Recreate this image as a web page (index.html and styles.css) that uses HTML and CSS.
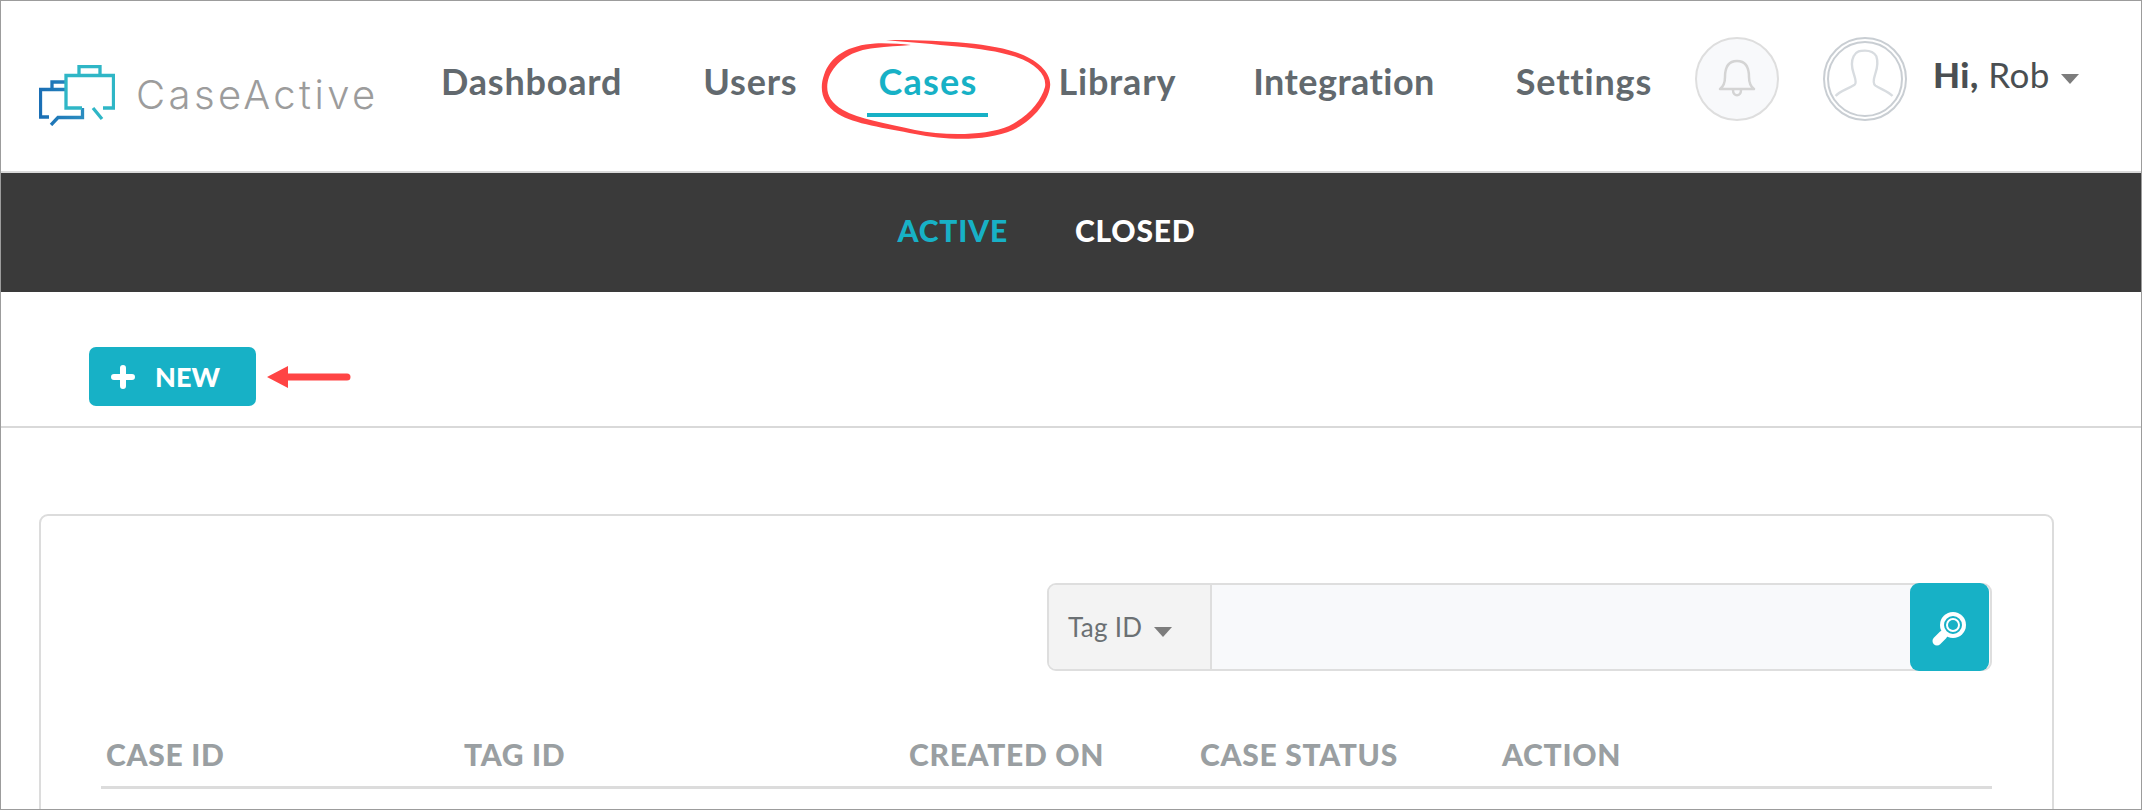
FILE: index.html
```html
<!DOCTYPE html>
<html lang="en">
<head>
  <meta charset="UTF-8">
  <meta name="viewport" content="width=device-width, initial-scale=1.0">
  <title>CaseActive - Cases</title>
  <link rel="stylesheet" href="styles.css">
</head>
<body>
  <div class="page">
    <header class="topbar">
      <a class="logo" href="#">
        <svg class="logo-icon" width="76" height="61" viewBox="0 0 76 61" fill="none" stroke-width="3.300">
          <defs>
            <linearGradient id="backCase" x1="0" y1="0" x2="1" y2="0">
              <stop offset="0" stop-color="#1a6fb5"/>
              <stop offset="1" stop-color="#2a8cc0"/>
            </linearGradient>
          </defs>
          <path d="M26 24.500H1.500V52H10M13 24.500V17H26M12 60L19 52.500H43.500V43" stroke="url(#backCase)"/>
          <path d="M40 10.500V1.500H61V10.500M43 43H27V10.500H74.500V43H64M54 43L63 54" stroke="#2fb6c6"/>
        </svg>
        <span class="logo-text">CaseActive</span>
      </a>
      <nav class="main-nav">
        <a href="#">Dashboard</a>
        <a href="#">Users</a>
        <a href="#" class="current">Cases</a>
        <a href="#">Library</a>
        <a href="#" class="tight">Integration</a>
        <a href="#">Settings</a>
      </nav>
      <button class="bell" type="button" aria-label="Notifications">
        <svg width="40" height="42" viewBox="0 0 40 42" fill="none" stroke="#d4d4d4" stroke-width="2.500">
          <path d="M3 31C7 28 8 25 8 19C8 9 12 3 20 3C28 3 32 9 32 19C32 25 33 28 37 31Z" stroke-linejoin="round"/>
          <path d="M16 32C16 39 24 39 24 32"/>
        </svg>
      </button>
      <div class="avatar">
        <svg width="72" height="72" viewBox="0 0 76 76" fill="none" stroke="#d8dce0" stroke-width="2.500">
          <path d="M7 56C11 51 19 49 27 44C30 42 27 36 26 32C24 26 23 20 26 14C29 8 33 8 38 8C43 8 47 9 50 14C52 20 51 26 49 32C48 36 45 42 49 45C55 49 63 51 67 56"/>
        </svg>
      </div>
      <div class="user-menu">
        <b>Hi,</b> Rob <i class="caret"></i>
      </div>
    </header>

    <nav class="sub-nav">
      <a href="#" class="current">ACTIVE</a>
      <a href="#">CLOSED</a>
    </nav>

    <div class="toolbar">
      <button class="new-btn" type="button">
        <svg width="24" height="24" viewBox="0 0 24 24" stroke="#fff" stroke-width="6" stroke-linecap="round">
          <path d="M12 3V21M3 12H21"/>
        </svg>
        NEW
      </button>
      <svg class="arrow" width="84" height="22" viewBox="0 0 84 22" fill="#ff4444">
        <path d="M0 11L21 0V7.500H80A3.500 3.500 0 0 1 80 14.500H21V22Z"/>
      </svg>
    </div>

    <section class="card">
      <form class="search">
        <div class="search-type">Tag ID <i class="caret"></i></div>
        <input class="search-input" type="text">
        <button class="search-btn" type="button" aria-label="Search">
          <svg width="38" height="38" viewBox="0 0 38 38" fill="none">
            <path d="M12 25L6 31" stroke="#fff" stroke-width="9" stroke-linecap="round"/>
            <circle cx="22" cy="15" r="13" fill="#fff"/>
            <circle cx="22" cy="15" r="8" stroke="#17b1c6" stroke-width="2"/>
            <circle cx="22" cy="15" r="5" fill="#17b1c6" stroke="none"/>
          </svg>
        </button>
      </form>
      <div class="table-head">
        <span>CASE ID</span>
        <span>TAG ID</span>
        <span>CREATED ON</span>
        <span>CASE STATUS</span>
        <span>ACTION</span>
      </div>
    </section>

    <!-- hand drawn ring from the annotated screenshot -->
    <svg class="ring" width="245" height="110" viewBox="0 0 245 110" fill="#ff4444">
      <path d="M71 5C120 5 170 7 200 17C224 25 237 39 235 52C233 66 219 85 198 95C170 107 130 105 100 99C70 93 39 89 23 79C7 69 4 54 9 40C15 21 34 10 60 8.500C72 8 86 9 96 10C84 11.500 72 11 60 13C37 15 21 26 14 42C10 54 12 66 28 75C44 84 70 88 100 95C130 101 170 101 194 91C214 81 226 66 230 52C232 40 221 28 198 21C170 12 120 10 71 5Z"/>
    </svg>
  </div>
</body>
</html>
```

FILE: styles.css
```css
* {
  box-sizing: border-box;
}

body {
  margin: 0;
  background-color: #fff;
  font-family: 'Lato', 'Liberation Sans', sans-serif;
}

a {
  text-decoration: none;
}

.page {
  position: relative;
  height: 810px;
  overflow: hidden;
  border: 1px solid #9c9c9c;
}

/* top bar */
.topbar {
  display: flex;
  align-items: center;
  height: 172px;
  padding-left: 38px;
  border-bottom: 2px solid #d9d9d9;
}

.logo {
  display: flex;
  align-items: center;
  width: 402px;
  padding-top: 18px;
}

.logo-text {
  margin-left: 21px;
  margin-top: -2px;
  font-family: 'Inter', 'Lato', sans-serif;
  font-size: 40px;
  font-weight: 300;
  letter-spacing: 3.400px;
  color: #9c9c9c;
}

.main-nav {
  display: flex;
  gap: 81px;
  margin-top: -10px;
}

.main-nav a {
  position: relative;
  font-size: 36px;
  font-weight: 700;
  letter-spacing: 0.800px;
  color: #62696e;
}

.main-nav a.tight {
  margin-left: -4px;
  letter-spacing: 0.450px;
}

.main-nav a.current {
  letter-spacing: 1.200px;
  color: #17b1c6;
}

.main-nav a.current::after {
  content: "";
  position: absolute;
  left: -11px;
  right: -11px;
  bottom: -14px;
  height: 4px;
  background-color: #17b1c6;
}

.bell {
  display: flex;
  align-items: center;
  justify-content: center;
  width: 84px;
  height: 84px;
  margin: -14px 0 0 43px;
  padding: 0;
  background-color: #f8f9fb;
  border: 2px solid #dedede;
  border-radius: 50%;
}

.avatar {
  display: flex;
  align-items: center;
  justify-content: center;
  width: 84px;
  height: 84px;
  margin: -14px 0 0 44px;
  border: 6px double #c9ced3;
  border-radius: 50%;
}

.user-menu {
  margin: -24px 0 0 26px;
  font-size: 35px;
  letter-spacing: 0.500px;
  color: #4a4f52;
}

.user-menu b {
  font-weight: 900;
}

.caret {
  display: inline-block;
  width: 0;
  height: 0;
  margin-left: 12px;
  vertical-align: middle;
  border-left: 9px solid transparent;
  border-right: 9px solid transparent;
  border-top: 10px solid #7c7c7c;
}

.user-menu .caret {
  margin-left: 2px;
}

/* dark sub nav */
.sub-nav {
  display: flex;
  justify-content: center;
  align-items: center;
  gap: 67px;
  height: 119px;
  padding: 0 49px 6px 0;
  background-color: #3a3a3a;
}

.sub-nav a {
  font-size: 30px;
  font-weight: 900;
  letter-spacing: 0.800px;
  color: #fff;
}

.sub-nav a.current {
  color: #17b1c6;
}

/* new button row */
.toolbar {
  display: flex;
  align-items: center;
  height: 136px;
  padding: 35px 0 0 88px;
  border-bottom: 2px solid #d9d9d9;
}

.new-btn {
  display: flex;
  align-items: center;
  gap: 20px;
  width: 167px;
  height: 59px;
  padding: 0 0 0 22px;
  font-family: inherit;
  font-size: 27px;
  font-weight: 900;
  color: #fff;
  background-color: #17b1c6;
  border: 0;
  border-radius: 7px;
}

.arrow {
  margin-left: 11px;
}

/* card */
.card {
  height: 400px;
  width: 2015px;
  margin: 86px 0 0 38px;
  padding: 67px 60px 0 60px;
  border: 2px solid #dcdcdc;
  border-radius: 9px;
}

.search {
  display: flex;
  width: 945px;
  height: 88px;
  margin-left: auto;
  border: 2px solid #dedede;
  border-radius: 9px;
  background-color: #f8f9fb;
}

.search-type {
  display: flex;
  align-items: center;
  width: 163px;
  padding-left: 19px;
  font-size: 26px;
  letter-spacing: 0.300px;
  color: #6b7073;
  background-color: #f3f3f3;
  border-right: 2px solid #dedede;
  border-radius: 7px 0 0 7px;
}

.search-type .caret {
  margin-top: 10px;
}

.search-input {
  flex: 1;
  border: 0;
  background: transparent;
}

.search-btn {
  display: flex;
  align-items: center;
  justify-content: center;
  width: 79px;
  height: 88px;
  margin-top: -2px;
  padding: 4px 0 0;
  margin-right: 1px;
  background-color: #17b1c6;
  border: 0;
  border-radius: 9px;
}

.table-head {
  display: grid;
  grid-template-columns: 358px 445px 291px 302px 1fr;
  align-items: center;
  width: 1891px;
  height: 54px;
  margin: 64px 0 0 0;
  padding-left: 5px;
  padding-bottom: 14px;
  border-bottom: 3px solid #dcdcdc;
  font-size: 30px;
  font-weight: 900;
  letter-spacing: 0.700px;
  color: #9a9fa2;
}

.ring {
  position: absolute;
  left: 814px;
  top: 34px;
}
```
